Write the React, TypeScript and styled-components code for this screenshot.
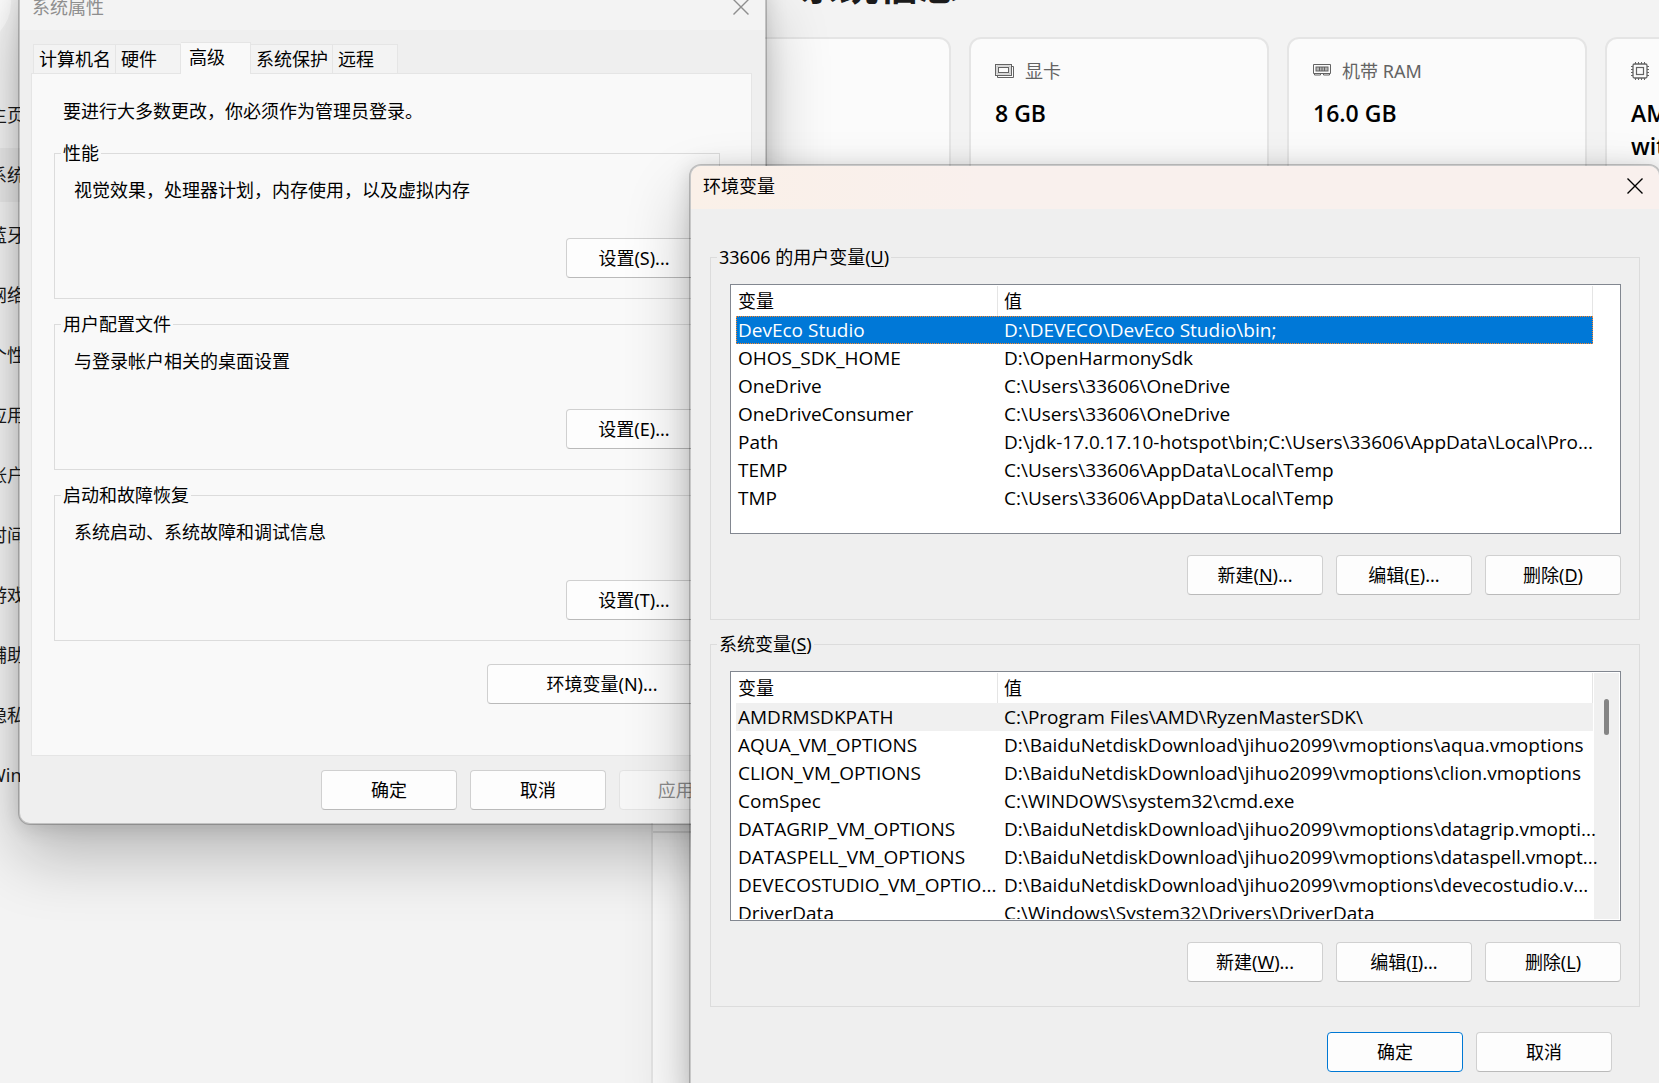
import React from "react";
import styled, { createGlobalStyle, css } from "styled-components";

const GlobalStyle = createGlobalStyle`
  *, *::before, *::after { box-sizing: border-box; }
  html, body { margin: 0; height: 100%; overflow: hidden; }
  body, button, table {
    font-family: "Noto Sans", "Noto Sans CJK SC", sans-serif;
    font-size: 18px;
    line-height: 24px;
    color: #000;
  }
`;

const Desktop = styled.div`
  position: relative;
  height: 100vh;
  overflow: hidden;
  background: #f3f3f3;
`;

/* ---------- Settings window (background) ---------- */

const SettingsWindow = styled.div`
  position: absolute;
  top: -60px;
  left: -75px;
  right: 0;
  bottom: 0;
  display: grid;
  grid-template-columns: 726px minmax(0, 1fr);
  overflow: hidden;
`;

const Sidebar = styled.aside`
  padding: 21px 0 0 2px;
`;

const Avatar = styled.div`
  width: 84px;
  height: 84px;
  border-radius: 50%;
  background: #fbfbfb;
`;

const Nav = styled.nav`
  display: flex;
  flex-direction: column;
  gap: 6px;
  margin: 43px 0 0;
`;

const NavItem = styled.a<{ $active?: boolean }>`
  display: flex;
  align-items: center;
  height: 54px;
  padding-left: 62px;
  border-radius: 6px;
  color: #1b1b1b;
  text-decoration: none;
  background: ${(p) => (p.$active ? "#e9e9e9" : "transparent")};
`;

const Main = styled.main`
  display: flex;
  flex-direction: column;
  min-width: 0;
  padding-top: 21px;
`;

const Heading = styled.h1`
  margin: 0 0 28px;
  padding-left: 148px;
  font-size: 40px;
  line-height: 48px;
  font-weight: 700;
  color: #1b1b1b;
`;

const Cards = styled.div`
  display: flex;
  gap: 18px;
`;

const Card = styled.section`
  flex: 0 0 300px;
  height: 230px;
  padding: 20px 24px;
  border: 2px solid #e5e5e5;
  border-radius: 12px;
  background: #fbfbfb;
`;

const CardLabel = styled.div`
  display: flex;
  align-items: center;
  gap: 10px;
  height: 24px;
  color: #636363;
`;

const CardValue = styled.div`
  margin-top: 14px;
  font-family: "Open Sans", "Noto Sans CJK SC", sans-serif;
  font-size: 23px;
  line-height: 33px;
  font-weight: 600;
  white-space: pre-line;
`;

const DetailPanel = styled.div`
  flex: 1;
  margin-top: 18px;
  border-left: 2px solid #e5e5e5;
  border-top: 2px solid #e5e5e5;
  border-radius: 12px 0 0 0;
  background: #fbfbfb;
`;

const DetailRow = styled.div`
  height: 546px;
  border-bottom: 2px solid #e0e0e0;
`;

/* ---------- Dialog parts ---------- */

const DialogWindow = styled.section`
  position: absolute;
  border: 2px solid rgba(0, 0, 0, 0.2);
  border-radius: 12px;
  background: #efefef;
  background-clip: padding-box;
  box-shadow: 0 32px 64px rgba(0, 0, 0, 0.24), 0 2px 21px rgba(0, 0, 0, 0.14);
`;

const PropertiesWindow = styled(DialogWindow)`
  top: -15px;
  left: 18px;
  width: 749px;
`;

const VariablesWindow = styled(DialogWindow)`
  top: 164px;
  left: 689px;
  right: -2px;
`;

const TitleBar = styled.header<{ $active?: boolean }>`
  display: flex;
  align-items: center;
  justify-content: space-between;
  height: 43px;
  padding: 0 16px 3px 12px;
  border-radius: 10px 10px 0 0;
  color: ${(p) => (p.$active ? "#000" : "#8e8e8e")};
  background: ${(p) =>
    p.$active ? "linear-gradient(90deg, #faf0e8, #f9f0ed 30%, #f9f0ed)" : "#f3f3f3"};
`;

const Title = styled.h2`
  margin: 0;
  font-size: 18px;
  line-height: 24px;
  font-weight: 400;
`;

const CloseButton = styled.button`
  display: flex;
  padding: 0;
  border: 0;
  background: none;
  color: inherit;
`;

const PropertiesBody = styled.div`
  padding: 12px 0 13px;
`;

const Tabs = styled.div`
  display: flex;
  align-items: flex-end;
  padding-left: 13px;
`;

const Tab = styled.button<{ $active?: boolean }>`
  height: 29px;
  min-width: 65px;
  padding: 0 4px 0 5px;
  border: 1px solid #e5e5e5;
  border-bottom: 0;
  border-left-width: 0;
  background: #f3f3f3;
  text-align: left;

  &:first-child {
    border-left-width: 1px;
  }

  ${(p) =>
    p.$active &&
    css`
      position: relative;
      height: 32px;
      min-width: 70px;
      margin-bottom: -1px;
      padding: 0 8px 4px;
      background: #f9f9f9;
    `}
`;

const TabPanel = styled.div`
  display: flex;
  flex-direction: column;
  margin: 0 13px 0 11px;
  padding: 25px 31px 51px 22px;
  border: 1px solid #e5e5e5;
  background: #f9f9f9;
`;

const Intro = styled.p`
  margin: 0 0 18px;
  padding-left: 9px;
`;

const Group = styled.fieldset`
  min-width: 0;
  margin: 0;
  padding: 0;
  border: 1px solid #dcdcdc;

  & + & {
    margin-top: 13px;
  }
`;

const VariableGroup = styled(Group)`
  & + & {
    margin-top: 12px;
  }
`;

const GroupTitle = styled.legend`
  margin-left: 6px;
  padding: 0 2px;
`;

const GroupContent = styled.div`
  display: flex;
  flex-direction: column;
  gap: 36px;
  padding: 13px 17px 20px 19px;
`;

const GroupText = styled.p`
  margin: 0;
`;

const PushButton = styled.button<{ $primary?: boolean; $wide?: boolean }>`
  align-self: flex-end;
  flex: none;
  width: ${(p) => (p.$wide ? 230 : 136)}px;
  height: 40px;
  padding: 0;
  border: 1px solid ${(p) => (p.$primary ? "#0078d4" : "#d0d0d0")};
  border-bottom-color: ${(p) => (p.$primary ? "#0078d4" : "#bababa")};
  border-radius: 4px;
  background: #fdfdfd;

  &:disabled {
    border-color: #e3e3e3;
    background: #f6f6f6;
    color: #8c8c8c;
  }
`;

const EnvironmentRow = styled.div`
  display: flex;
  justify-content: flex-end;
  margin-top: 23px;
  padding-right: 3px;
`;

const ButtonRow = styled.div`
  display: flex;
  justify-content: flex-end;
  gap: 13px;
`;

const PropertiesFooter = styled(ButtonRow)`
  margin-top: 14px;
  padding-right: 10px;
`;

const VariablesBody = styled.div`
  padding: 36px 19px 24px;
`;

const VariableContent = styled.div`
  padding: 15px 18px 24px 19px;
`;

const VariablesFooter = styled(ButtonRow)`
  margin-top: 25px;
  padding-right: 28px;
`;

const ListBox = styled.div`
  display: flex;
  height: 250px;
  margin-bottom: 21px;
  padding: 1px 1px 1px 5px;
  border: 1px solid #828790;
  background: #fff;
`;

const ListViewport = styled.div`
  position: relative;
  z-index: 1;
  flex: 1;
  min-width: 0;
  overflow-x: visible;
  overflow-y: clip;
`;

const ScrollTrack = styled.div<{ $visible?: boolean }>`
  width: 25px;
  margin-left: 1px;
  padding: 26px 0 0 10px;
  background: ${(p) => (p.$visible ? "#f0f0f0" : "transparent")};
`;

const ScrollThumb = styled.div`
  width: 5px;
  height: 36px;
  border-radius: 3px;
  background: #858585;
`;

const VariableTable = styled.table`
  width: 100%;
  table-layout: fixed;
  border-collapse: separate;
  border-spacing: 0;

  th, td {
    padding: 0 0 0 6px;
    text-align: left;
    font-weight: 400;
    white-space: nowrap;
  }

  th:first-child, td:first-child {
    width: 262px;
    padding-left: 2px;
  }

  th {
    height: 30px;
    border-right: 1px solid #e5e5e5;
  }

  td {
    height: 28px;
    font-family: "Open Sans", "Noto Sans CJK SC", sans-serif;
    font-size: 19px;
  }
`;

const VariableRow = styled.tr<{ $state?: "selected" | "marked" }>`
  ${(p) =>
    p.$state === "selected" &&
    css`
      background: #0078d7;
      color: #fff;
      outline: 1px dotted #ff8728;
      outline-offset: -1px;
    `}
  ${(p) =>
    p.$state === "marked" &&
    css`
      background: #f0f0f0;
    `}
`;

const Key = styled.u`
  text-decoration-thickness: 1px;
  text-underline-offset: 2px;
`;

/* ---------- Icons ---------- */

const CloseIcon = () => (
  <svg width="16" height="16" viewBox="0 0 16 16" fill="none" stroke="currentColor" strokeWidth="1.4">
    <path d="M.5.5l15 15M15.5.5l-15 15" />
  </svg>
);

const GraphicsIcon = () => (
  <svg width="20" height="16" viewBox="0 0 20 16" fill="none" stroke="#636363">
    <rect x=".5" y="1.5" width="16" height="11" />
    <rect x="2" y="3" width="13" height="8" stroke="#b5b5b5" />
    <rect x="3.5" y="4.5" width="10" height="5" />
    <path d="M2.5 14.5h16v-11h-2M2.5 12.5v2" />
  </svg>
);

const MemoryIcon = () => (
  <svg width="19" height="16" viewBox="0 0 19 16" fill="none" stroke="#636363">
    <path d="M.5 1.5h17v9H.5z" />
    <path d="M1.5 10.5v1.500h6v-1.500M10.500 10.500v1.500h6v-1.500" />
    <rect x="3" y="4" width="12" height="4" fill="#b5b5b5" />
    <path d="M6.500 4v4M9 4v4M11.500 4v4" />
  </svg>
);

const ProcessorIcon = () => (
  <svg width="19" height="19" viewBox="0 0 19 19" fill="none" stroke="#636363">
    <rect x="2" y="2" width="14" height="14" rx="1.5" strokeWidth="1.3" />
    <rect x="5.5" y="5.5" width="7" height="7" strokeWidth="1.2" />
    <path d="M4.5 0v2M7.5 0v2M10.5 0v2M13.5 0v2M4.5 16v2M7.5 16v2M10.5 16v2M13.5 16v2M0 4.5h2M0 7.5h2M0 10.5h2M0 13.5h2M16 4.5h2M16 7.5h2M16 10.5h2M16 13.5h2" />
  </svg>
);

/* ---------- Data ---------- */

const navItems = ["主页", "系统", "蓝牙", "网络", "个性", "应用", "帐户", "时间", "游戏", "辅助", "隐私", "Win"];

const tabs = ["计算机名", "硬件", "高级", "系统保护", "远程"];

const propertyGroups = [
  { title: "性能", text: "视觉效果，处理器计划，内存使用，以及虚拟内存", button: "设置(S)..." },
  { title: "用户配置文件", text: "与登录帐户相关的桌面设置", button: "设置(E)..." },
  { title: "启动和故障恢复", text: "系统启动、系统故障和调试信息", button: "设置(T)..." },
];

const userVariables: [string, string][] = [
  ["DevEco Studio", "D:\\DEVECO\\DevEco Studio\\bin;"],
  ["OHOS_SDK_HOME", "D:\\OpenHarmonySdk"],
  ["OneDrive", "C:\\Users\\33606\\OneDrive"],
  ["OneDriveConsumer", "C:\\Users\\33606\\OneDrive"],
  ["Path", "D:\\jdk-17.0.17.10-hotspot\\bin;C:\\Users\\33606\\AppData\\Local\\Pro..."],
  ["TEMP", "C:\\Users\\33606\\AppData\\Local\\Temp"],
  ["TMP", "C:\\Users\\33606\\AppData\\Local\\Temp"],
];

const systemVariables: [string, string][] = [
  ["AMDRMSDKPATH", "C:\\Program Files\\AMD\\RyzenMasterSDK\\"],
  ["AQUA_VM_OPTIONS", "D:\\BaiduNetdiskDownload\\jihuo2099\\vmoptions\\aqua.vmoptions"],
  ["CLION_VM_OPTIONS", "D:\\BaiduNetdiskDownload\\jihuo2099\\vmoptions\\clion.vmoptions"],
  ["ComSpec", "C:\\WINDOWS\\system32\\cmd.exe"],
  ["DATAGRIP_VM_OPTIONS", "D:\\BaiduNetdiskDownload\\jihuo2099\\vmoptions\\datagrip.vmopti..."],
  ["DATASPELL_VM_OPTIONS", "D:\\BaiduNetdiskDownload\\jihuo2099\\vmoptions\\dataspell.vmopt..."],
  ["DEVECOSTUDIO_VM_OPTIO...", "D:\\BaiduNetdiskDownload\\jihuo2099\\vmoptions\\devecostudio.v..."],
  ["DriverData", "C:\\Windows\\System32\\Drivers\\DriverData"],
];

interface VariableListProps {
  title: string;
  accessKey: string;
  rows: [string, string][];
  firstRow: "selected" | "marked";
  scrollable?: boolean;
  keys: [string, string, string];
}

function VariableList({ title, accessKey, rows, firstRow, scrollable, keys }: VariableListProps) {
  return (
    <VariableGroup>
      <GroupTitle>
        {title}(<Key>{accessKey}</Key>)
      </GroupTitle>
      <VariableContent>
        <ListBox>
          <ListViewport>
            <VariableTable>
              <thead>
                <tr>
                  <th scope="col">变量</th>
                  <th scope="col">值</th>
                </tr>
              </thead>
              <tbody>
                {rows.map(([name, value], index) => (
                  <VariableRow key={name} $state={index === 0 ? firstRow : undefined}>
                    <td>{name}</td>
                    <td>{value}</td>
                  </VariableRow>
                ))}
              </tbody>
            </VariableTable>
          </ListViewport>
          <ScrollTrack $visible={scrollable}>{scrollable && <ScrollThumb />}</ScrollTrack>
        </ListBox>
        <ButtonRow>
          <PushButton type="button">新建(<Key>{keys[0]}</Key>)...</PushButton>
          <PushButton type="button">编辑(<Key>{keys[1]}</Key>)...</PushButton>
          <PushButton type="button">删除(<Key>{keys[2]}</Key>)</PushButton>
        </ButtonRow>
      </VariableContent>
    </VariableGroup>
  );
}

export default function App() {
  return (
    <Desktop>
      <GlobalStyle />
      <SettingsWindow>
        <Sidebar>
          <Avatar />
          <Nav>
            {navItems.map((item) => (
              <NavItem key={item} href="#" $active={item === "系统"}>
                {item}
              </NavItem>
            ))}
          </Nav>
        </Sidebar>
        <Main>
          <Heading>系统信息</Heading>
          <Cards>
            <Card />
            <Card>
              <CardLabel><GraphicsIcon />显卡</CardLabel>
              <CardValue>8 GB</CardValue>
            </Card>
            <Card>
              <CardLabel><MemoryIcon />机带 RAM</CardLabel>
              <CardValue>16.0 GB</CardValue>
            </Card>
            <Card>
              <CardLabel><ProcessorIcon /></CardLabel>
              <CardValue>{"AMD\nwith"}</CardValue>
            </Card>
          </Cards>
          <DetailPanel>
            <DetailRow />
          </DetailPanel>
        </Main>
      </SettingsWindow>

      <PropertiesWindow>
        <TitleBar>
          <Title>系统属性</Title>
          <CloseButton type="button" aria-label="关闭"><CloseIcon /></CloseButton>
        </TitleBar>
        <PropertiesBody>
          <Tabs role="tablist">
            {tabs.map((tab) => (
              <Tab key={tab} type="button" role="tab" aria-selected={tab === "高级"} $active={tab === "高级"}>
                {tab}
              </Tab>
            ))}
          </Tabs>
          <TabPanel role="tabpanel">
            <Intro>要进行大多数更改，你必须作为管理员登录。</Intro>
            {propertyGroups.map((group) => (
              <Group key={group.title}>
                <GroupTitle>{group.title}</GroupTitle>
                <GroupContent>
                  <GroupText>{group.text}</GroupText>
                  <PushButton type="button">{group.button}</PushButton>
                </GroupContent>
              </Group>
            ))}
            <EnvironmentRow>
              <PushButton type="button" $wide>环境变量(N)...</PushButton>
            </EnvironmentRow>
          </TabPanel>
          <PropertiesFooter>
            <PushButton type="button">确定</PushButton>
            <PushButton type="button">取消</PushButton>
            <PushButton type="button" disabled>应用(A)</PushButton>
          </PropertiesFooter>
        </PropertiesBody>
      </PropertiesWindow>

      <VariablesWindow>
        <TitleBar $active>
          <Title>环境变量</Title>
          <CloseButton type="button" aria-label="关闭"><CloseIcon /></CloseButton>
        </TitleBar>
        <VariablesBody>
          <VariableList
            title="33606 的用户变量"
            accessKey="U"
            rows={userVariables}
            firstRow="selected"
            keys={["N", "E", "D"]}
          />
          <VariableList
            title="系统变量"
            accessKey="S"
            rows={systemVariables}
            firstRow="marked"
            scrollable
            keys={["W", "I", "L"]}
          />
          <VariablesFooter>
            <PushButton type="button" $primary>确定</PushButton>
            <PushButton type="button">取消</PushButton>
          </VariablesFooter>
        </VariablesBody>
      </VariablesWindow>
    </Desktop>
  );
}
